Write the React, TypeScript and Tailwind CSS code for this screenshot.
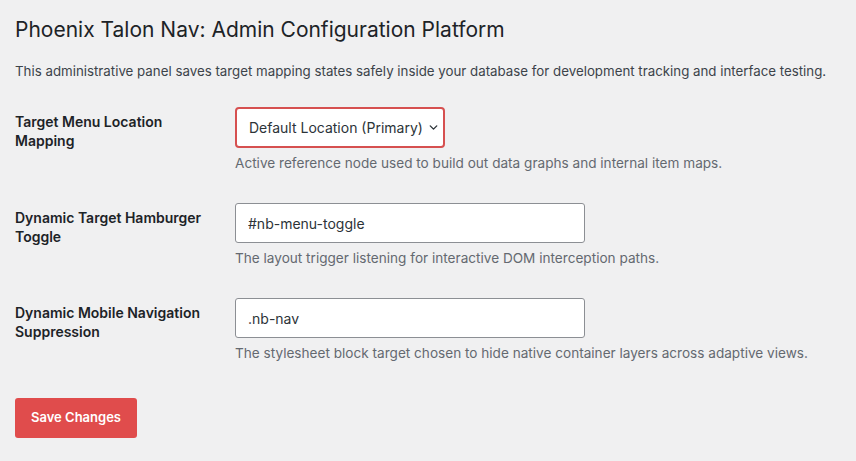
import { ChevronDown } from "lucide-react";

type FieldRowProps = {
  label: string[];
  description: string;
  children: React.ReactNode;
};

function FieldRow({ label, description, children }: FieldRowProps) {
  return (
    <div className="flex">
      <div className="w-[220px] shrink-0 pt-[5px] text-[14px] font-semibold leading-[19px] text-[#1d2327]">
        {label.map((line) => (
          <div key={line}>{line}</div>
        ))}
      </div>
      <div>
        {children}
        <p className="mt-[5px] text-[13.6px] leading-[20px] text-[#646970]">{description}</p>
      </div>
    </div>
  );
}

export default function App() {
  return (
    <div
      className="min-h-screen bg-[#f0f0f1] px-[15px] pt-[16px]"
      style={{ fontFamily: "Inter, 'Noto Sans', Arial, sans-serif" }}
    >
      <h1 className="text-[21px] font-normal leading-[28px] text-[#1d2327]">
        Phoenix Talon Nav: Admin Configuration Platform
      </h1>
      <p className="mt-[18px] text-[13.3px] leading-[18px] text-[#3c434a]">
        This administrative panel saves target mapping states safely inside your database for development tracking and interface testing.
      </p>

      <div className="mt-[27px] flex flex-col gap-[30px]">
        <FieldRow
          label={["Target Menu Location", "Mapping"]}
          description="Active reference node used to build out data graphs and internal item maps."
        >
          <div className="flex h-[41px] w-[210px] items-center gap-[4px] rounded-[4px] border-2 border-[#d65050] bg-white pl-[12px] text-[14px] text-[#2c3338]">
            <span>Default Location (Primary)</span>
            <ChevronDown size={13} strokeWidth={2.5} />
          </div>
        </FieldRow>

        <FieldRow
          label={["Dynamic Target Hamburger", "Toggle"]}
          description="The layout trigger listening for interactive DOM interception paths."
        >
          <input
            type="text"
            defaultValue="#nb-menu-toggle"
            className="block h-[40px] w-[350px] rounded-[3px] border border-[#8c8f94] bg-white px-[12px] text-[14px] text-[#2c3338] outline-none"
          />
        </FieldRow>

        <FieldRow
          label={["Dynamic Mobile Navigation", "Suppression"]}
          description="The stylesheet block target chosen to hide native container layers across adaptive views."
        >
          <input
            type="text"
            defaultValue=".nb-nav"
            className="block h-[40px] w-[350px] rounded-[3px] border border-[#8c8f94] bg-white px-[12px] text-[14px] text-[#2c3338] outline-none"
          />
        </FieldRow>
      </div>

      <button
        type="button"
        className="mt-[35px] h-[40px] w-[122px] rounded-[3px] bg-[#e04c4c] text-[13px] font-semibold text-white"
      >
        Save Changes
      </button>
    </div>
  );
}
